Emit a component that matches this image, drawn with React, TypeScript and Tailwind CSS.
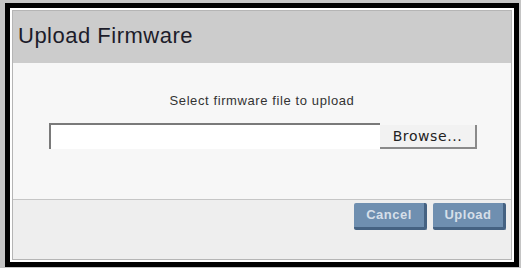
import React from 'react';

export default function App() {
  return (
    <div className="h-[268px] w-[521px] bg-[#c4c4c4] pb-[1px] pl-[5px] pr-[2px] pt-[3px] font-['Liberation_Sans',Arial,sans-serif]">
      <div className="flex h-full w-full flex-col border-[5px] border-black">
        <div className="flex h-full w-full flex-col border-2 border-white">
          <div className="flex h-full w-full flex-col border border-[#b5b5b5]">
            <div className="flex h-[52px] items-center bg-[#cccccc] pl-[5px]">
              <h1 className="pb-[3px] text-[22px] tracking-[0.5px] text-[#1c1c2a]">Upload Firmware</h1>
            </div>

            <div className="flex h-[136px] flex-col items-center bg-[#f7f7f7] pt-[28px]">
              <p className="text-[13px] tracking-[0.6px] text-[#333]">Select firmware file to upload</p>
              <div className="mt-[12px] flex items-end pl-[2px]">
                <div className="h-[26px] w-[331px] border-l-2 border-t-2 border-[#7a7a7a] bg-white" />
                <button className="h-[24px] w-[97px] border-b-2 border-r-2 border-[#8a8a8a] bg-[#f2f2f2] pt-[1px] font-['DejaVu_Sans',sans-serif] text-[14px] tracking-[0.6px] text-[#222]">
                  Browse...
                </button>
              </div>
            </div>

            <div className="flex flex-1 justify-end gap-[6px] border-t border-[#c6c6c6] bg-[#eeeeee] pr-[5px] pt-[3px]">
              <button className="h-[27px] w-[73px] rounded-[2px] border-b-[3px] border-r-[3px] border-[#456282] bg-[#6f8fb0] text-[13px] font-bold tracking-[0.5px] text-[#d6dfe9]">
                Cancel
              </button>
              <button className="h-[27px] w-[73px] rounded-[2px] border-b-[3px] border-r-[3px] border-[#456282] bg-[#6f8fb0] text-[13px] font-bold tracking-[0.5px] text-[#d6dfe9]">
                Upload
              </button>
            </div>
          </div>
        </div>
      </div>
    </div>
  );
}
